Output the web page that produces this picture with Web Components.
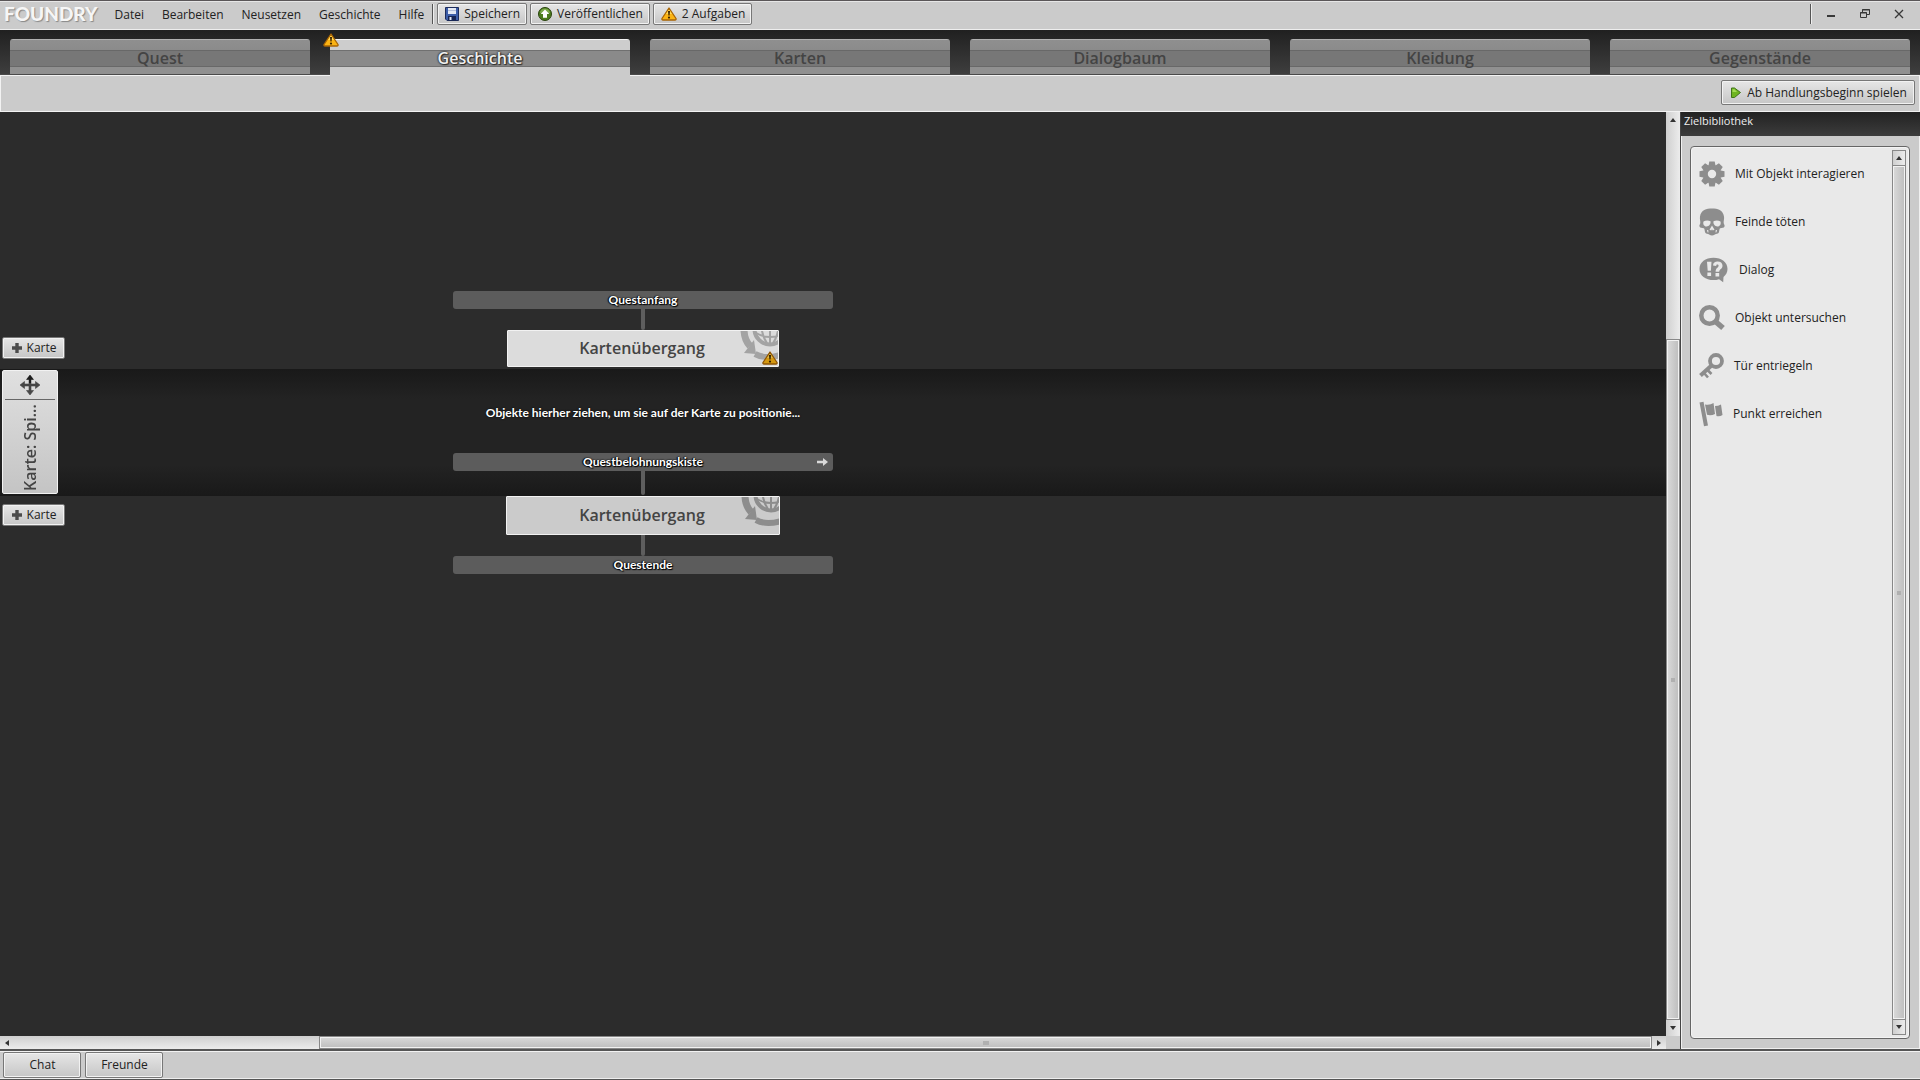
<!DOCTYPE html>
<html lang="de">
<head>
<meta charset="utf-8">
<title>Foundry</title>
<style>
  html, body { margin: 0; height: 100%; }
  body { background: #2c2c2c; font: 12px/16px "Open Sans", "Noto Sans", sans-serif; color: #222; overflow: hidden; }
</style>
</head>
<body>
<foundry-app></foundry-app>
<script>
const define = (name, html, setup) => {
  const template = document.createElement('template');
  template.innerHTML = html;
  customElements.define(name, class extends HTMLElement {
    constructor() {
      super();
      this.attachShadow({ mode: 'open' }).append(template.content.cloneNode(true));
    }
    connectedCallback() { if (setup) setup(this, this.shadowRoot); }
  });
};

const warning = `<svg width="16" height="14" viewBox="0 0 16 14"><path d="M8 1 15 11.5Q15.4 13 14 13H2Q.6 13 1 11.5Z" fill="#fbb414" stroke="#a86405" stroke-width="1.3" stroke-linejoin="round"/><path d="M8 2.6 11 7H5Z" fill="#ffd95a"/><path d="M7 4h2l-.4 4.6H7.4Z" fill="#3d2500"/><circle cx="8" cy="10.6" r="1.1" fill="#3d2500"/></svg>`;

const ICONS = {
  warning,
  save: `<svg width="14" height="14" viewBox="0 0 14 14"><path d="M.5.5h13v13H2L.5 12Z" fill="#3c5da8" stroke="#1d2c5c"/><path d="M3 1h8v6H3Z" fill="#e4e9f4"/><path d="M3 3h8v1H3Z" fill="#b5c0da"/><path d="M3 9h8v4.5H3Z" fill="#172553"/><path d="M4.500 10h2v3h-2Z" fill="#dfe5f2"/></svg>`,
  publish: `<svg width="14" height="14" viewBox="0 0 14 14"><circle cx="7" cy="7" r="6.500" fill="#4c7c1c" stroke="#29420f"/><path d="M2 6a5 4.500 0 0 1 10 0Z" fill="#7ba84a"/><path d="M7 2.500 11.300 7H9v3.800H5V7H2.700Z" fill="#fff"/></svg>`,
  play: `<svg width="12" height="12" viewBox="0 0 12 12"><path d="M1.500 1H4.500L10.500 5.500 4.500 10.500H1.500Z" fill="#6fb51f" stroke="#41741a" stroke-linejoin="round"/><path d="M2.500 2.200H4.500L7 5H2.500Z" fill="#a3db55"/></svg>`,
  plus: `<svg width="10" height="10" viewBox="0 0 10 10"><path d="M3.300 0h3.400v3.300H10v3.400H6.700V10H3.300V6.700H0V3.300h3.300Z" fill="#4c4c4c"/></svg>`,
  move: `<svg width="20" height="20" viewBox="0 0 20 20"><path d="M10 0 13.500 4.500H11V9h4.500V6.500L20 10l-4.500 3.500V11H11v4.500h2.500L10 20l-3.500-4.500H9V11H4.500v2.500L0 10l4.500-3.500V9H9V4.500H6.500Z" fill="#474747" stroke="#474747" stroke-width=".6"/><path d="M10 0 13.500 4.500H11V8H9V4.500H6.500Z" fill="#1c1c1c"/></svg>`,
  arrow: `<svg width="11" height="8" viewBox="0 0 11 8"><path d="M0 2.800h6V0l5 4-5 4V5.200H0Z" fill="#d9d9d9"/></svg>`,
  minimize: `<svg width="10" height="12" viewBox="0 0 10 12"><path d="M1 7h8v2H1Z" fill="#383838"/></svg>`,
  restore: `<svg width="12" height="12" viewBox="0 0 12 12" fill="none" stroke="#383838"><path d="M3.500 4V1.500h7v5H8"/><path d="M3 2h8" /><path d="M1.500 4.500h6v5h-6Z"/><path d="M1 5h7"/></svg>`,
  close: `<svg width="10" height="12" viewBox="0 0 10 12"><path d="M1 2l8 8M9 2 1 10" stroke="#383838" stroke-width="1.300"/></svg>`,
  gear: `<svg width="26" height="26" viewBox="-13 -13 26 26"><g fill="#8d8d8d"><path d="M-2.700-12.500h5.400l1 5h-7.400Z"/><path d="M-2.700-12.500h5.400l1 5h-7.400Z" transform="rotate(45)"/><path d="M-2.700-12.500h5.400l1 5h-7.400Z" transform="rotate(90)"/><path d="M-2.700-12.500h5.400l1 5h-7.400Z" transform="rotate(135)"/><path d="M-2.700-12.500h5.400l1 5h-7.400Z" transform="rotate(180)"/><path d="M-2.700-12.500h5.400l1 5h-7.400Z" transform="rotate(225)"/><path d="M-2.700-12.500h5.400l1 5h-7.400Z" transform="rotate(270)"/><path d="M-2.700-12.500h5.400l1 5h-7.400Z" transform="rotate(315)"/></g><circle r="6.700" fill="none" stroke="#8d8d8d" stroke-width="5"/></svg>`,
  skull: `<svg width="26" height="28" viewBox="0 0 26 28"><path fill="#8d8d8d" fill-rule="evenodd" d="M13 .5C18.500.5 24 2 25 8.500c.4 2.500-.5 4.500-.3 6.500.2 1.500 1.300 2 .8 3.500-.6 1.700-2.700 1-4.300 1.800-.9.500-.8 2-1.200 3.700-.4 1.500-1.700 1.700-3 2-1 .3-1.800 1.500-4 1.500s-3-1.200-4-1.500c-1.300-.3-2.600-.5-3-2-.4-1.700-.3-3.200-1.200-3.700C3.200 19.500 1.100 20.200.5 18.500 0 17 1.100 16.500 1.300 15 1.500 13 .6 11 1 8.500 2 2 7.500.5 13 .5ZM4.500 13.500c-.8 2.500.5 5 3 5 2.700 0 4.500-2.500 4-5.200-2-1-5-1-7 .2Zm17 0c-2-1.200-5-1.200-7-.2-.5 2.700 1.300 5.200 4 5.200 2.500 0 3.800-2.500 3-5ZM13 17.500l-2.500 4.300 1.700.7.800-1.300.8 1.300 1.700-.7ZM8 22l.5 2.300 1 .2-.3-2.500Zm10 0-1.200 0-.3 2.500 1-.2Z"/></svg>`,
  dialog: `<svg width="30" height="26" viewBox="0 0 30 26"><path d="M14.500.8C22.500.8 28.500 5.300 28.500 12c0 3.300-1.500 6-4 8l-.3 5.200-4.200-3c-1.700.6-3.500.9-5.500.9C6.500 23.100.5 18.700.5 12S6.500.8 14.500.8Z" fill="#8d8d8d"/><path d="M8 4.800h4.500l-.6 9H8.700ZM8.400 15.500h3.700V19H8.400ZM14 8.500c.2-3 2-4 4.500-4 3 0 5 1.500 5 4.200 0 3.300-3.300 3.400-3.300 6.100h-3.600c0-4 3-4.200 3-6 0-.8-.5-1.200-1.200-1.200-.8 0-1.100.5-1.200 1.400ZM16.500 16h3.700v3.400h-3.700Z" fill="#e9e9e9"/></svg>`,
  search: `<svg width="26" height="26" viewBox="0 0 26 26" fill="none" stroke="#8d8d8d"><circle cx="10.500" cy="10.500" r="8.200" stroke-width="4.500"/><path d="M17 17l7 6" stroke-width="5.500"/></svg>`,
  key: `<svg width="25" height="26" viewBox="0 0 25 26" fill="none" stroke="#8d8d8d"><circle cx="17" cy="8" r="6" stroke-width="3.800"/><path d="M12.500 12.500 1.500 22.500" stroke-width="4"/><path d="M8.500 17l4 4M5 20l4 4.500" stroke-width="2.600"/></svg>`,
  flag: `<svg width="24" height="26" viewBox="0 0 24 26" fill="#8d8d8d"><path d="M.500 1.500 4.500.8 9 24.500 5 25.300Z"/><path d="M6 3.500Q11 4.500 14.500 2L16 13Q12 15 8 13.800Z"/><path d="M16 5Q19 5 22 3.500L23.500 14Q20.500 16 17.500 15Z"/></svg>`,
  globe: `<svg width="40" height="38" viewBox="0 0 40 38" fill="none" stroke="currentColor"><circle cx="31" cy="-1" r="15.500" stroke-width="4"/><path d="M17 3Q31 11 45 3M31-16V14M24-14Q20 2 28 13M38-14Q42 2 34 13M16-1H46" stroke-width="2"/><path d="M5-3Q4.500 9 11 16" stroke-width="7"/><path d="M5 23 17 24 15 10Z" fill="currentColor" stroke="none"/><path d="M16 24Q27 30 44 24" stroke-width="6"/></svg>`,
  up: `<svg width="6" height="4" viewBox="0 0 6 4"><path d="M3 0 6 4H0Z" fill="#333"/></svg>`,
  down: `<svg width="6" height="4" viewBox="0 0 6 4"><path d="M0 0H6L3 4Z" fill="#333"/></svg>`,
  left: `<svg width="4" height="6" viewBox="0 0 4 6"><path d="M0 3 4 0V6Z" fill="#333"/></svg>`,
  right: `<svg width="4" height="6" viewBox="0 0 4 6"><path d="M4 3 0 6V0Z" fill="#333"/></svg>`
};

define('app-icon', `<style>:host{display:block;flex:none}span,svg{display:block}</style><span></span>`,
  (el, root) => { root.querySelector('span').innerHTML = ICONS[el.getAttribute('name')]; });

define('tool-button', `
<style>
  :host { display: block; }
  button { display: flex; align-items: center; justify-content: center; gap: 5px; width: 100%; height: 100%; box-sizing: border-box;
    margin: 0; padding: 1px 6px 1px 7px; font: inherit; color: #222; white-space: nowrap;
    background: linear-gradient(#e6e6e6, #c6c6c6); border: 1px solid #777; border-radius: 2px; box-shadow: inset 0 0 0 1px #f2f2f2; }
</style>
<button type="button"><slot name="icon"></slot><slot></slot></button>`);

define('menu-bar', `
<style>
  :host { display: flex; align-items: center; height: 30px; box-sizing: border-box; padding: 0 4px 2px 4px;
    background: #cbcbcb; border-top: 1px solid #5a5658; border-bottom: 1px solid #eee; box-shadow: inset 0 1px #e6e6e6; }
  h1 { margin: 0 17px 0 0; font: 900 19px/24px Lato, "Open Sans", sans-serif; color: #f6f6f6; text-shadow: 1px 1px 1px #888; }
  nav { display: flex; gap: 18px; padding-top: 2px; }
  nav button, .win button { margin: 0; padding: 0; border: 0; background: none; font: inherit; color: #222; }
  .sep { width: 1px; height: 20px; background: #555; box-shadow: 1px 0 #eee; }
  nav + .sep { margin: 0 4px 0 8px; }
  .tools { display: flex; gap: 3px; height: 22px; }
  .win { display: flex; align-items: center; gap: 0; margin-left: auto; }
  .win button { display: flex; justify-content: center; width: 34px; }
  .win .sep { margin-right: 3px; }
</style>
<h1>FOUNDRY</h1>
<nav aria-label="Menü"><button>Datei</button><button>Bearbeiten</button><button>Neusetzen</button><button>Geschichte</button><button>Hilfe</button></nav>
<span class="sep"></span>
<div class="tools">
  <tool-button><app-icon slot="icon" name="save"></app-icon>Speichern</tool-button>
  <tool-button><app-icon slot="icon" name="publish"></app-icon>Veröffentlichen</tool-button>
  <tool-button><app-icon slot="icon" name="warning"></app-icon>2 Aufgaben</tool-button>
</div>
<div class="win"><span class="sep"></span>
  <button aria-label="Minimieren"><app-icon name="minimize"></app-icon></button>
  <button aria-label="Wiederherstellen"><app-icon name="restore"></app-icon></button>
  <button aria-label="Schließen"><app-icon name="close"></app-icon></button>
</div>`);

define('tab-item', `
<style>
  :host { display: block; flex: 1; position: relative; }
  button { display: block; width: 100%; height: 35px; margin: 0; padding: 0; border: 0; border-radius: 3px 3px 0 0;
    font: 600 16px/38px "Open Sans", sans-serif; color: #444;
    background: linear-gradient(#b0b0b0 1px, #8f8f8f 1px, #8b8b8b 11px, #686868 11px, #686868 12px, #777 12px, #777 27px, #686868 27px, #686868 28px, #909090 28px); }
  :host([active]) button { height: 37px; color: #f0f0f0; text-shadow: 0 0 2px #222, 0 0 2px #222, 1px 1px 1px #333;
    background: linear-gradient(#f4f4f4 1px, #cdcdcd 1px, #cdcdcd 11px, #707070 11px, #707070 12px, #8a8a8a 12px, #8a8a8a 27px, #707070 27px, #707070 28px, #cbcbcb 28px); }
  ::slotted(app-icon) { position: absolute; left: -7px; top: -6px; }
</style>
<button role="tab"><slot></slot></button><slot name="badge"></slot>`);

define('tab-strip', `
<style>
  :host { display: flex; gap: 20px; height: 45px; box-sizing: border-box; padding: 9px 10px 0;
    background: linear-gradient(#202020, #3e3e3e); border-bottom: 1px solid #4a4a4a; }
</style>
<slot></slot>`);

define('scroll-bar', `
<style>
  :host { display: flex; flex: none; flex-direction: column; width: 14px; box-sizing: border-box; background: linear-gradient(90deg, #cfcfcf, #ececec);  }
  i { display: flex; flex: none; align-items: center; justify-content: center; height: 16px; }
  b { flex: 1; box-sizing: border-box; margin-top: var(--before, 0px); background: linear-gradient(90deg, #dadada, #bdbdbd);
    border: 1px solid #888; box-shadow: inset 0 0 0 1px #f2f2f2; display: flex; align-items: center; justify-content: center; }
  u { width: 4px; height: 4px; background: #b0b0b0; }
  :host([horizontal]) { flex-direction: row; width: auto; height: 13px; background: linear-gradient(#cfcfcf, #ececec); }
  :host([horizontal]) i { width: 14px; height: auto; }
  :host([horizontal]) b { margin: 0 0 0 var(--before, 0px); background: linear-gradient(#dadada, #bdbdbd); }
  :host([horizontal]) u { width: 6px; }
  :host([framed]) { width: 14px; border: 1px solid #888; }
  :host([framed]) i { height: 14px; }
  :host([framed]) b { border-width: 1px 0; }
</style>
<i class="a"></i><b><u></u></b><i class="z"></i>`,
  (el, root) => {
    const h = el.hasAttribute('horizontal');
    root.querySelector('.a').innerHTML = ICONS[h ? 'left' : 'up'];
    root.querySelector('.z').innerHTML = ICONS[h ? 'right' : 'down'];
  });

define('flow-bar', `
<style>
  :host { display: flex; align-items: center; justify-content: center; position: relative; width: 380px; height: 18px; border-radius: 3px; background: #5c5c5c;
    color: #fff; font: 700 12px/16px Lato, sans-serif; text-shadow: 0 0 2px #000, 1px 1px 1px #000, -1px 0 1px #000; }
  ::slotted(app-icon) { position: absolute; right: 5px; top: 5px; }
</style>
<slot></slot><slot name="end"></slot>`);

define('flow-link', `
<style>
  :host { display: block; width: 4px; background: #5e5e5e; border-radius: 0 0 2px 2px; }
</style>`);

define('transition-card', `
<style>
  :host { display: grid; place-items: center; position: relative; box-sizing: border-box; overflow: hidden; width: 272px; height: 37px; padding: 0 2px 1px 0; background: #dcdcdc; border: 1px solid #f2f2f2; border-radius: 1px;
    font: 600 16px/24px "Open Sans", sans-serif; color: #444; }
  :host([dim]) { width: 274px; height: 39px; background: #cbcbcb; }
  .globe { position: absolute; right: -1px; top: -1px; color: #a3a3a3; }
  :host([dim]) .globe { color: #8d8d8d; }
  ::slotted(app-icon) { position: absolute; right: 0; bottom: 1px; filter: brightness(.85); }
</style>
<slot></slot><app-icon class="globe" name="globe"></app-icon><slot name="badge"></slot>`);

define('map-handle', `
<style>
  :host { display: flex; flex-direction: column; align-items: center; box-sizing: border-box; width: 56px; height: 124px; padding: 4px 2px 2px;
    border: 1px solid #f2f2f2; border-radius: 2px; background: linear-gradient(#e0e0e0, #c4c4c4); color: #444; }
  app-icon { padding-bottom: 4px; }
  hr { width: 100%; margin: 0; border: 0; border-top: 1px solid #666; }
  div { flex: 1; writing-mode: vertical-rl; transform: rotate(180deg); font: 600 16px/24px "Open Sans", sans-serif; }
</style>
<app-icon name="move"></app-icon><hr><div><slot></slot></div>`);

define('story-lane', `
<style>
  :host { display: grid; grid-template-columns: 453px 380px; }
  .side { padding-left: 2px; }
  .flow { display: flex; flex-direction: column; align-items: center; }
  :host([start]) { align-items: end; height: 257px; }
  :host([start]) .side { padding-bottom: 10px; }
  :host([start]) .flow { padding-bottom: 2px; }
  :host([band]) { height: 127px; background: linear-gradient(#191919, #232323 30px, #232323 96px, #191919); }
  :host([band]) .side { padding-top: 1px; }
  :host([end]) .side { padding-top: 8px; }
</style>
<div class="side"><slot name="side"></slot></div><div class="flow"><slot></slot></div>`);

define('story-canvas', `
<style>
  :host { display: block; min-width: 0; background: #2c2c2c; overflow: hidden; }
  tool-button { width: 63px; height: 22px; }
  .hint { margin: 0; height: 84px; color: #fff; font: 700 12px/88px Lato, sans-serif; text-shadow: 0 0 2px #000; white-space: nowrap; }
  .l1 { height: 21px; } .l2 { height: 24px; } .l3 { height: 21px; }
</style>
<story-lane start>
  <tool-button slot="side"><app-icon slot="icon" name="plus"></app-icon>Karte</tool-button>
  <flow-bar>Questanfang</flow-bar><flow-link class="l1"></flow-link>
  <transition-card>Kartenübergang<app-icon slot="badge" name="warning"></app-icon></transition-card>
</story-lane>
<story-lane band>
  <map-handle slot="side">Karte: Spi...</map-handle>
  <p class="hint">Objekte hierher ziehen, um sie auf der Karte zu positionie...</p>
  <flow-bar>Questbelohnungskiste<app-icon slot="end" name="arrow"></app-icon></flow-bar><flow-link class="l2"></flow-link>
</story-lane>
<story-lane end>
  <tool-button slot="side"><app-icon slot="icon" name="plus"></app-icon>Karte</tool-button>
  <transition-card dim>Kartenübergang</transition-card><flow-link class="l3"></flow-link>
  <flow-bar>Questende</flow-bar>
</story-lane>`);

define('goal-item', `
<style>:host { display: flex; align-items: center; gap: 10px; height: 48px; color: #222; white-space: nowrap; }</style>
<slot name="icon"></slot><slot></slot>`);

define('goal-library', `
<style>
  :host { display: flex; flex-direction: column; width: 240px; box-sizing: border-box; border-left: 1px solid #444; background: #cbcbcb; }
  h2 { margin: 0; height: 24px; padding-left: 3px; font: 11px/18px "Open Sans", sans-serif; color: #eee; background: linear-gradient(#222, #3c3c3c); }
  .frame { flex: 1; display: flex; padding: 10px 9px 9px 8px; border: solid #f0f0f0; border-width: 0 1px 1px 1px; }
  .box { flex: 1; display: flex; border: 1px solid #666; border-radius: 4px; background: #e9e9e9; box-shadow: inset 0 0 0 1px #f4f4f4; padding: 3px 3px 3px 8px; }
  .list { flex: 1; }
</style>
<h2>Zielbibliothek</h2>
<div class="frame"><div class="box"><div class="list">
  <goal-item><app-icon slot="icon" name="gear"></app-icon>Mit Objekt interagieren</goal-item>
  <goal-item><app-icon slot="icon" name="skull"></app-icon>Feinde töten</goal-item>
  <goal-item><app-icon slot="icon" name="dialog"></app-icon>Dialog</goal-item>
  <goal-item><app-icon slot="icon" name="search"></app-icon>Objekt untersuchen</goal-item>
  <goal-item><app-icon slot="icon" name="key"></app-icon>Tür entriegeln</goal-item>
  <goal-item><app-icon slot="icon" name="flag"></app-icon>Punkt erreichen</goal-item>
</div><scroll-bar framed></scroll-bar></div></div>`);

define('foundry-app', `
<style>
  :host { display: flex; flex-direction: column; height: 100vh; }
  .actions { display: flex; justify-content: flex-end; height: 37px; box-sizing: border-box; padding: 4px 4px 6px; background: #cbcbcb; border: 1px solid #f2f2f2; }
  .actions tool-button { width: 194px; }
  main { flex: 1; display: flex; min-height: 0; border-bottom: 2px solid #555; }
  .stage { flex: 1; display: grid; grid-template: 1fr 13px / 1fr 14px; min-width: 0; }
  .corner { background: #cbcbcb; }
  .v { --before: 211px; } .h { --before: 305px; }
  footer { display: flex; gap: 4px; height: 29px; box-sizing: border-box; padding: 0 3px 1px; background: #cbcbcb; border-top: 1px solid #f2f2f2; border-bottom: 1px solid #555; box-shadow: inset 0 -1px #eee; }
  footer tool-button { width: 78px; }
</style>
<menu-bar></menu-bar>
<tab-strip role="tablist">
  <tab-item>Quest</tab-item>
  <tab-item active>Geschichte<app-icon slot="badge" name="warning"></app-icon></tab-item>
  <tab-item>Karten</tab-item>
  <tab-item>Dialogbaum</tab-item>
  <tab-item>Kleidung</tab-item>
  <tab-item>Gegenstände</tab-item>
</tab-strip>
<div class="actions"><tool-button><app-icon slot="icon" name="play"></app-icon>Ab Handlungsbeginn spielen</tool-button></div>
<main>
  <div class="stage">
    <story-canvas></story-canvas><scroll-bar class="v"></scroll-bar>
    <scroll-bar class="h" horizontal></scroll-bar><div class="corner"></div>
  </div>
  <goal-library></goal-library>
</main>
<footer><tool-button>Chat</tool-button><tool-button>Freunde</tool-button></footer>`);
</script>
</body>
</html>
